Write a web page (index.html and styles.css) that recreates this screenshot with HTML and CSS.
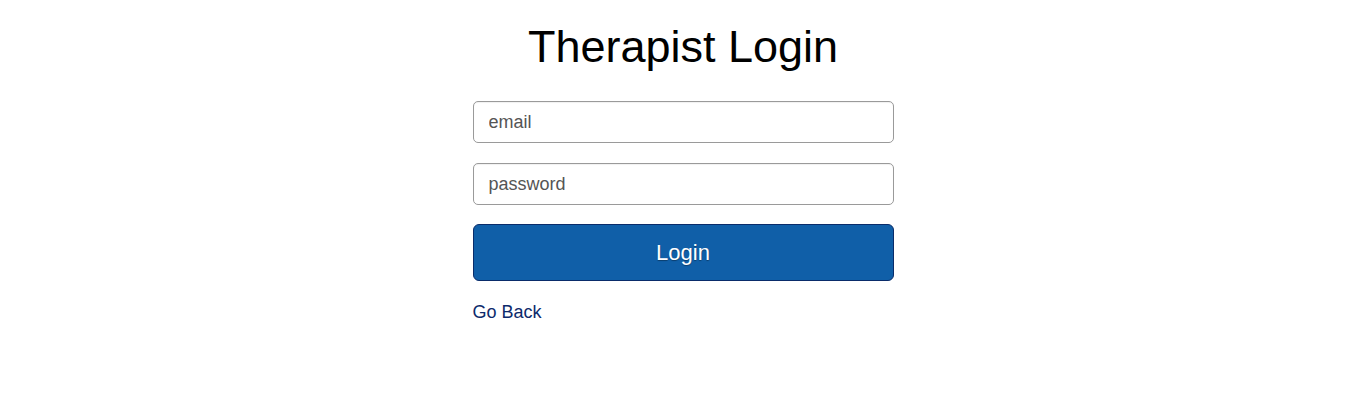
FILE: index.html
```html
<!DOCTYPE html>
<html>
<head>
<meta charset="utf-8">
<link rel="stylesheet" href="styles.css">
</head>
<body>
<main class="page">
  <h1 class="title">Therapist Login</h1>
  <form class="form">
    <input class="field" type="email" placeholder="email">
    <input class="field field-last" type="password" placeholder="password">
    <button class="btn" type="button">Login</button>
  </form>
  <a class="back" href="#">Go Back</a>
</main>
</body>
</html>
```

FILE: styles.css
```css
* { box-sizing: border-box; }
html, body { margin: 0; padding: 0; background: #fff; }
body { font-family: "Liberation Sans", Arial, sans-serif; }
.page {
  width: 421px;
  margin: 0 auto;
  padding-top: 20px;
  display: flex;
  flex-direction: column;
}
.title {
  margin: 0 0 27px 0;
  font-size: 45px;
  font-weight: normal;
  line-height: 54px;
  text-align: center;
  color: #000;
}
.form {
  display: flex;
  flex-direction: column;
  gap: 20px;
}
.field {
  width: 100%;
  height: 42px;
  border: 1px solid #9a9a9a;
  border-radius: 5px;
  padding: 0 15px;
  font-family: "Liberation Sans", Arial, sans-serif;
  font-size: 18px;
  color: #555;
  outline: none;
  box-shadow: inset 0 1px 1px rgba(0,0,0,0.06);
}
.field-last { margin-bottom: -1px; }
.field::placeholder { color: #555; opacity: 1; }
.btn {
  width: 100%;
  height: 57px;
  background: #105fa8;
  border: 1px solid #0a2c6a;
  border-radius: 6px;
  color: #fff;
  font-family: "Liberation Sans", Arial, sans-serif;
  font-size: 22px;
  text-shadow: 0 1px 1px rgba(0,0,0,0.35);
  cursor: pointer;
}
.back {
  margin-top: 20px;
  font-size: 18px;
  line-height: 22px;
  color: #0d2a6b;
  text-decoration: none;
  align-self: flex-start;
}
```
